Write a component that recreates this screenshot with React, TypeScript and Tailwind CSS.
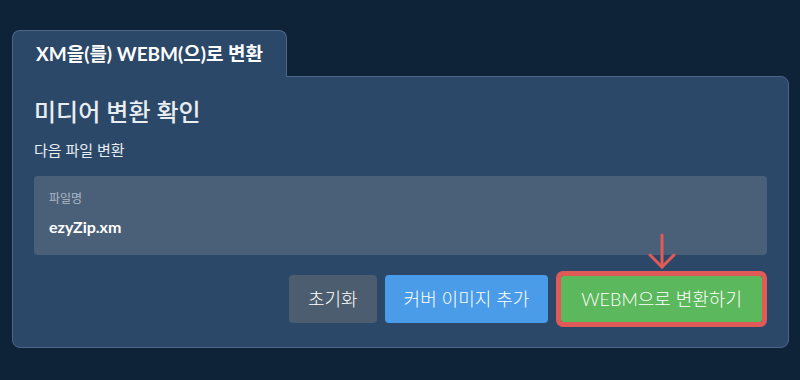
export default function App() {
  return (
    <div
      className="w-[800px] h-[380px] bg-[#0f2338] pt-[30px] px-[12px]"
      style={{ fontFamily: 'Lato, "Noto Sans CJK KR", sans-serif' }}
    >
      {/* tab */}
      <div className="flex">
        <div className="h-[47px] px-[23px] flex items-center bg-[#2c4868] border border-b-0 border-[#4b6687] rounded-t-[8px] text-white font-bold text-[19px] relative z-10 -mb-px">
          XM을(를) WEBM(으)로 변환
        </div>
      </div>

      {/* card */}
      <div className="w-[777px] bg-[#2c4868] border border-[#4b6687] rounded-b-[8px] rounded-tr-[8px] px-[21px] pt-[19px] pb-[24px]">
        <h2 className="text-[24px] leading-[32px] font-medium text-[#e8edf2]">미디어 변환 확인</h2>
        <p className="mt-[12px] text-[15px] leading-[20px] text-[#e8edf2]">다음 파일 변환</p>

        <div className="mt-[16px] bg-[#4a6078] rounded-[4px] px-[15px] pt-[14px] pb-[17px]">
          <div className="text-[12px] leading-[18px] text-[#aeb9c6]">파일명</div>
          <div className="mt-[8px] text-[16px] leading-[22px] font-bold text-white">ezyZip.xm</div>
        </div>

        <div className="mt-[20px] flex justify-end items-center gap-[8px] pr-[5px]">
          <button className="h-[48px] px-[19px] rounded-[4px] bg-[#4c5d6f] text-[18px] font-light text-white">초기화</button>
          <button className="h-[48px] px-[19px] rounded-[4px] bg-[#4a9be8] text-[18px] font-light text-white">커버 이미지 추가</button>
          <div className="relative ml-[5px]">
            <svg
              className="absolute left-1/2 -translate-x-1/2 -top-[43px]"
              width="30"
              height="38"
              viewBox="0 0 30 38"
              fill="none"
              stroke="#e05a58"
              strokeWidth="3"
              strokeLinecap="round"
              strokeLinejoin="round"
            >
              <path d="M15 2 V34" />
              <path d="M3 22 L15 34 L27 22" />
            </svg>
            <button className="h-[46px] px-[20px] rounded-[2px] bg-[#5cb85c] text-[18px] font-light text-white outline-[5px] outline-solid outline-[#e05a58] block">
              WEBM으로 변환하기
            </button>
          </div>
        </div>
      </div>
    </div>
  );
}
